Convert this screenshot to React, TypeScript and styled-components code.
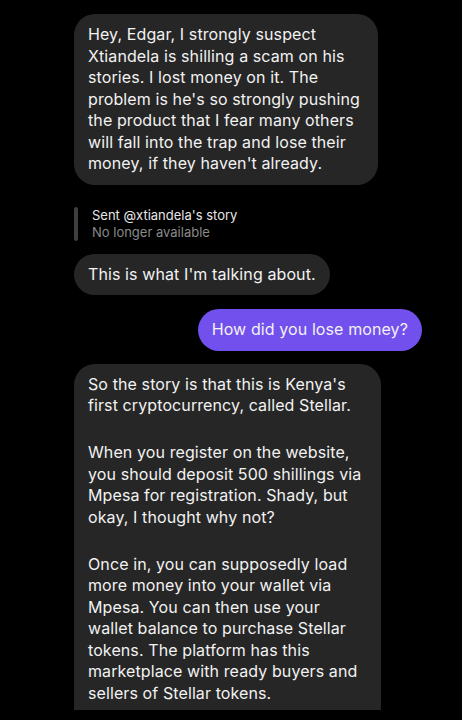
import React from "react";
import styled, { createGlobalStyle } from "styled-components";

const Global = createGlobalStyle`
  html, body { margin: 0; padding: 0; background: #000; }
  body { font-family: Inter, "Noto Sans", "Liberation Sans", sans-serif; -webkit-font-smoothing: antialiased; }
`;

const Thread = styled.div`
  width: 462px;
  height: 720px;
  box-sizing: border-box;
  padding: 14px 40px 0 74px;
  display: flex;
  flex-direction: column;
  background: #000;
  overflow: hidden;
`;

const Bubble = styled.div<{ $mine?: boolean; $cut?: boolean; $w?: number }>`
  align-self: ${(p) => (p.$mine ? "flex-end" : "flex-start")};
  box-sizing: border-box;
  width: ${(p) => (p.$w ? `${p.$w}px` : "auto")};
  background: ${(p) => (p.$mine ? "#7250ee" : "#262626")};
  color: #f2f2f2;
  font-size: 16px;
  line-height: 21.5px;
  letter-spacing: 0.1px;
  padding: ${(p) => (p.$cut ? "10px 14px 6px" : "10px 14px")};
  border-radius: ${(p) => (p.$cut ? "21px 21px 0 0" : "21px")};
  white-space: nowrap;
`;

const Para = styled.p`
  margin: 0;
  & + & { margin-top: 25.5px; }
`;

const StoryRef = styled.div`
  display: flex;
  gap: 14px;
  margin: 22px 0 13px;
`;

const StoryBar = styled.div`
  width: 4px;
  border-radius: 2px;
  background: #3e3e3e;
`;

const StoryText = styled.div`
  display: flex;
  flex-direction: column;
  font-size: 13px;
  line-height: 17px;
`;

const StoryTitle = styled.span`
  color: #e6e6e6;
`;

const StoryNote = styled.span`
  color: #8a8a8a;
`;

const Spacer = styled.div<{ $h: number }>`
  height: ${(p) => p.$h}px;
  flex-shrink: 0;
`;

const Lines = ({ lines }: { lines: string[] }) => (
  <>
    {lines.map((l, i) => (
      <React.Fragment key={i}>
        {l}
        {i < lines.length - 1 && <br />}
      </React.Fragment>
    ))}
  </>
);

export default function App() {
  return (
    <>
      <Global />
      <Thread>
        <Bubble $w={304}>
          <Lines
            lines={[
              "Hey, Edgar, I strongly suspect",
              "Xtiandela is shilling a scam on his",
              "stories. I lost money on it. The",
              "problem is he's so strongly pushing",
              "the product that I fear many others",
              "will fall into the trap and lose their",
              "money, if they haven't already.",
            ]}
          />
        </Bubble>
        <StoryRef>
          <StoryBar />
          <StoryText>
            <StoryTitle>Sent @xtiandela's story</StoryTitle>
            <StoryNote>No longer available</StoryNote>
          </StoryText>
        </StoryRef>
        <Bubble>This is what I'm talking about.</Bubble>
        <Spacer $h={14} />
        <Bubble $mine>How did you lose money?</Bubble>
        <Spacer $h={13} />
        <Bubble $cut $w={307}>
          <Para>
            <Lines lines={["So the story is that this is Kenya's", "first cryptocurrency, called Stellar."]} />
          </Para>
          <Para>
            <Lines
              lines={[
                "When you register on the website,",
                "you should deposit 500 shillings via",
                "Mpesa for registration. Shady, but",
                "okay, I thought why not?",
              ]}
            />
          </Para>
          <Para>
            <Lines
              lines={[
                "Once in, you can supposedly load",
                "more money into your wallet via",
                "Mpesa. You can then use your",
                "wallet balance to purchase Stellar",
                "tokens. The platform has this",
                "marketplace with ready buyers and",
                "sellers of Stellar tokens.",
              ]}
            />
          </Para>
        </Bubble>
      </Thread>
    </>
  );
}
